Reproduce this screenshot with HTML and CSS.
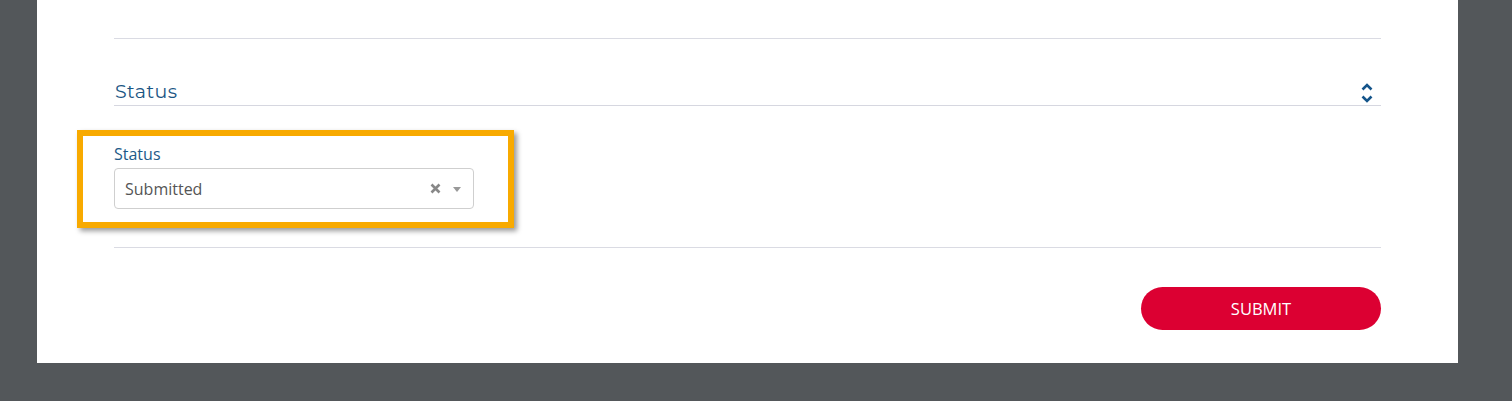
FILE: index.html
```html
<!DOCTYPE html>
<html lang="en">
<head>
    <meta charset="UTF-8">
    <meta name="viewport" content="width=device-width, initial-scale=1.0">
    <title>Status</title>
    <link rel="stylesheet" href="styles.css">
</head>
<body>
    <div class="panel">
        <hr class="divider">
        <div class="section-head">
            <h2>Status</h2>
            <svg class="toggle" width="14" height="22" viewBox="0 0 14 22">
                <path d="M2.5 7.5 L7 3 L11.5 7.5" fill="none" stroke="#14548a" stroke-width="2.6"/>
                <path d="M2.5 14.5 L7 19 L11.5 14.5" fill="none" stroke="#14548a" stroke-width="2.6"/>
            </svg>
        </div>
        <div class="field highlight">
            <label for="status">Status</label>
            <div class="select" id="status">
                <span class="value">Submitted</span>
                <span class="clear">
                    <svg width="11" height="11" viewBox="0 0 11 11">
                        <path d="M1.5 1.5 L9.5 9.5 M9.5 1.5 L1.5 9.5" stroke="#888" stroke-width="2.6"/>
                    </svg>
                </span>
                <span class="caret">
                    <svg width="8" height="5" viewBox="0 0 8 5"><path d="M0 0 L8 0 L4 5 Z" fill="#999"/></svg>
                </span>
            </div>
        </div>
        <hr class="divider bottom">
        <div class="actions">
            <button type="submit">Submit</button>
        </div>
    </div>
</body>
</html>
```

FILE: styles.css
```css
body {
    margin: 0;
    padding: 0;
    background-color: #53575a;
    font-family: "Open Sans", Arial, sans-serif;
    height: 401px;
}
.panel {
    margin-left: 37px;
    width: 1421px;
    height: 363px;
    box-sizing: border-box;
    background-color: #fff;
    padding: 38px 77px 0 77px;
}
.divider {
    border: 0;
    border-top: 1px solid #dadbe3;
    margin: 0;
}
.divider.bottom {
    margin-top: 38px;
}
.section-head {
    display: flex;
    align-items: flex-end;
    justify-content: space-between;
    height: 66px;
    border-bottom: 1px solid #d6d7e0;
}
.section-head h2 {
    margin: 0 0 2px 1px;
    font-family: "Montserrat", Lato, sans-serif;
    font-weight: 400;
    font-size: 19px;
    letter-spacing: 0.4px;
    color: #1b5684;
}
.toggle {
    margin: 0 7px 1px 0;
}
.field {
    position: relative;
    width: 360px;
    margin-top: 38px;
}
.highlight::after {
    content: "";
    position: absolute;
    top: -14px;
    left: -37px;
    right: -40px;
    bottom: -19px;
    border: 6px solid #f8aa00;
    box-shadow: 3px 3px 5px rgba(0, 0, 0, 0.4);
    pointer-events: none;
}
.field label {
    display: block;
    font-size: 16px;
    line-height: 20px;
    color: #1d5a88;
    margin-bottom: 4px;
}
.select {
    display: flex;
    align-items: center;
    height: 41px;
    box-sizing: border-box;
    border: 1px solid #cfcfcf;
    border-radius: 4px;
    padding: 0 12px 0 10px;
}
.select .value {
    flex: 1;
    font-size: 16px;
    color: #555;
}
.select .clear {
    display: flex;
    margin-right: 12px;
}
.select .caret {
    display: flex;
    margin-top: 1px;
}
.actions {
    display: flex;
    justify-content: flex-end;
    margin-top: 39px;
}
button {
    width: 240px;
    height: 43px;
    border: 0;
    border-radius: 22px;
    background-color: #dc0032;
    color: #fff;
    font-family: "Open Sans", Arial, sans-serif;
    font-size: 16.5px;
    text-transform: uppercase;
    cursor: pointer;
}
```
